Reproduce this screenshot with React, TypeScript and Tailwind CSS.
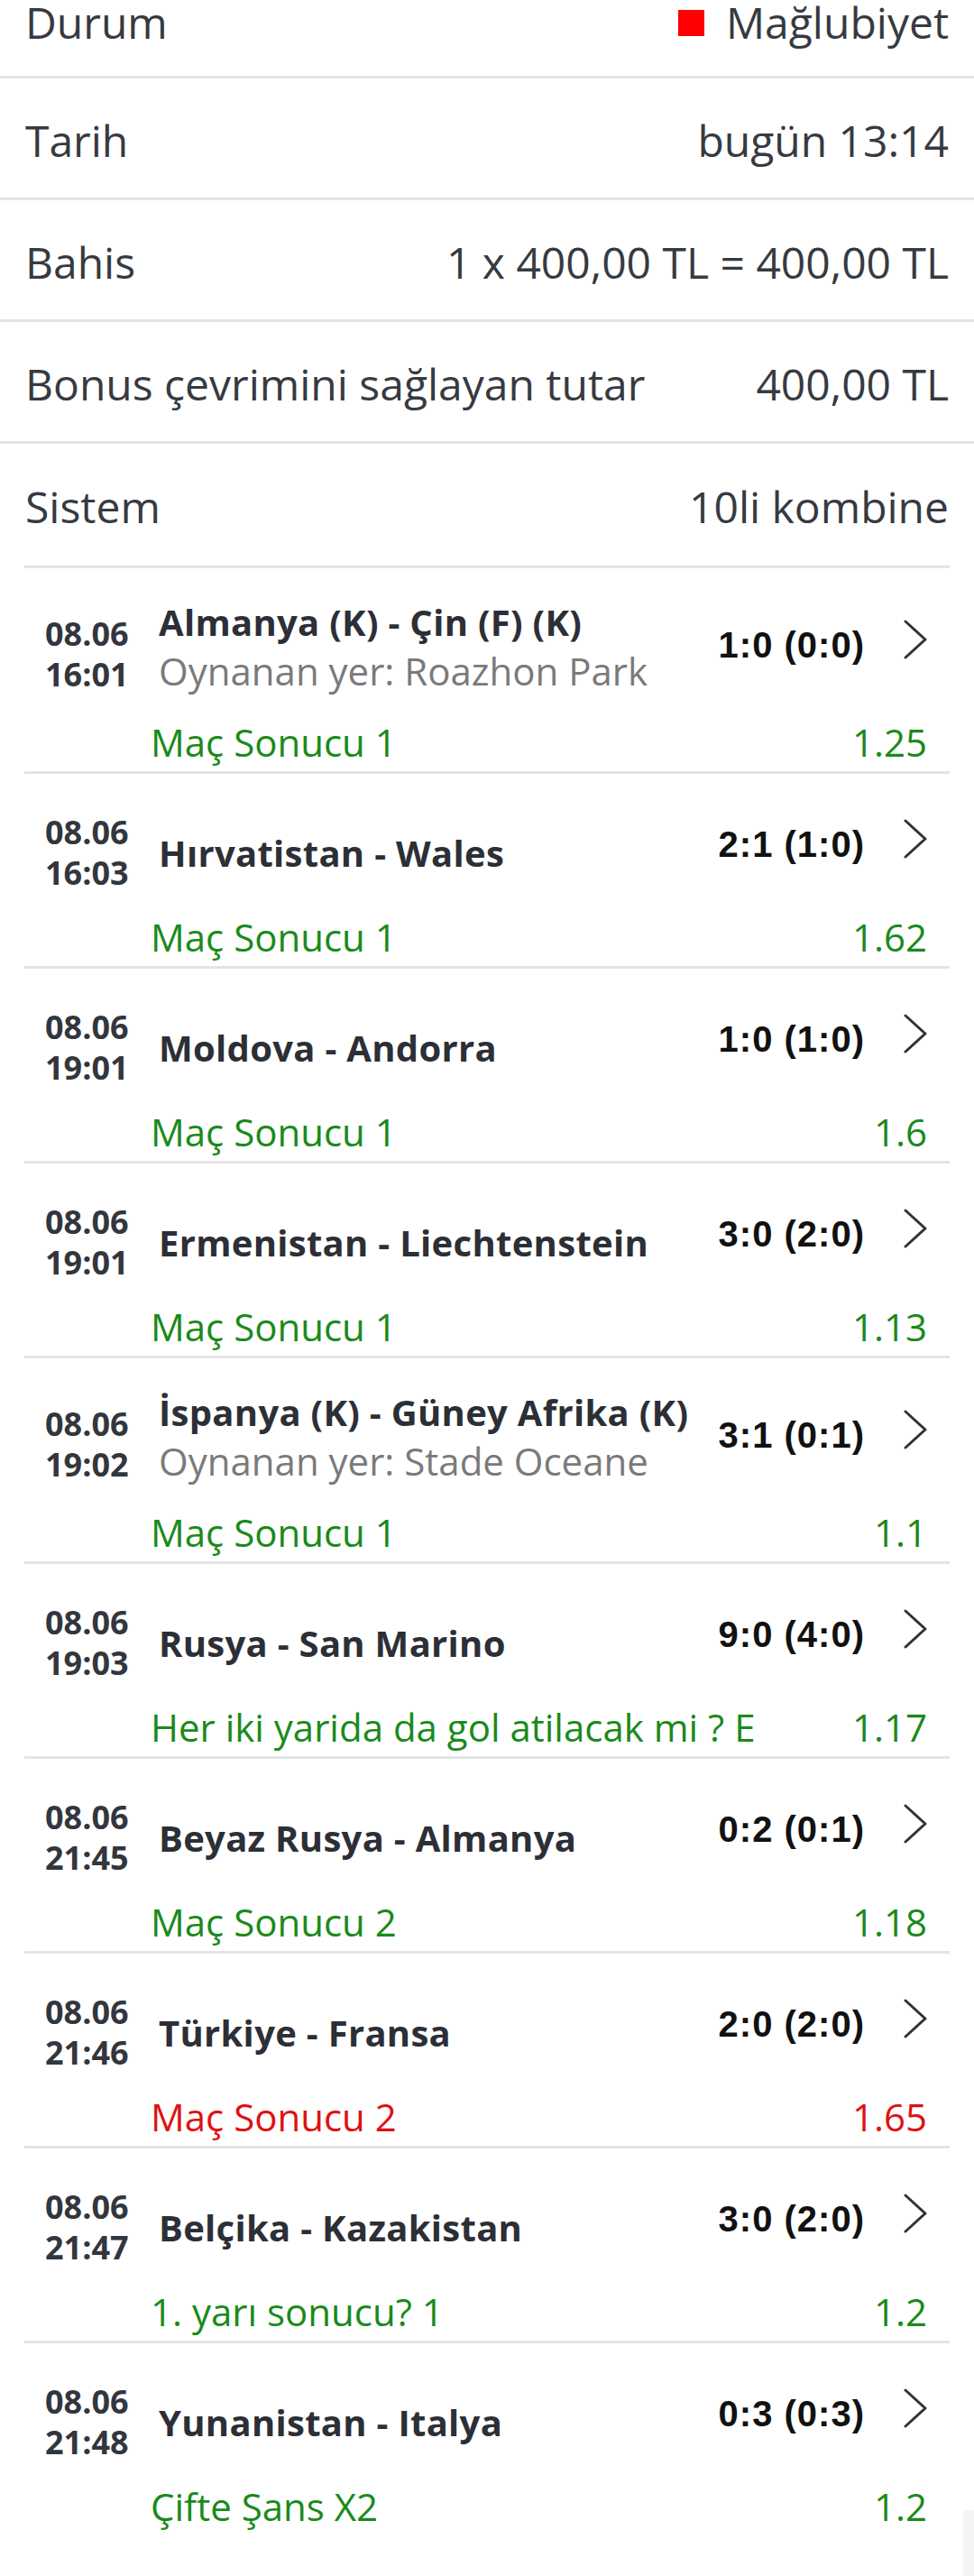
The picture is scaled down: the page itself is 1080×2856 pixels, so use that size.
import { ReactNode } from "react";

type Match = {
  date: string;
  time: string;
  teams: string;
  venue?: string;
  score: string;
  bet: string;
  odds: string;
  lost?: boolean;
};

const matches: Match[] = [
  { date: "08.06", time: "16:01", teams: "Almanya (K) - Çin (F) (K)", venue: "Oynanan yer: Roazhon Park", score: "1:0 (0:0)", bet: "Maç Sonucu 1", odds: "1.25" },
  { date: "08.06", time: "16:03", teams: "Hırvatistan - Wales", score: "2:1 (1:0)", bet: "Maç Sonucu 1", odds: "1.62" },
  { date: "08.06", time: "19:01", teams: "Moldova - Andorra", score: "1:0 (1:0)", bet: "Maç Sonucu 1", odds: "1.6" },
  { date: "08.06", time: "19:01", teams: "Ermenistan - Liechtenstein", score: "3:0 (2:0)", bet: "Maç Sonucu 1", odds: "1.13" },
  { date: "08.06", time: "19:02", teams: "İspanya (K) - Güney Afrika (K)", venue: "Oynanan yer: Stade Oceane", score: "3:1 (0:1)", bet: "Maç Sonucu 1", odds: "1.1" },
  { date: "08.06", time: "19:03", teams: "Rusya - San Marino", score: "9:0 (4:0)", bet: "Her iki yarida da gol atilacak mi ? E", odds: "1.17" },
  { date: "08.06", time: "21:45", teams: "Beyaz Rusya - Almanya", score: "0:2 (0:1)", bet: "Maç Sonucu 2", odds: "1.18" },
  { date: "08.06", time: "21:46", teams: "Türkiye - Fransa", score: "2:0 (2:0)", bet: "Maç Sonucu 2", odds: "1.65", lost: true },
  { date: "08.06", time: "21:47", teams: "Belçika - Kazakistan", score: "3:0 (2:0)", bet: "1. yarı sonucu? 1", odds: "1.2" },
  { date: "08.06", time: "21:48", teams: "Yunanistan - Italya", score: "0:3 (0:3)", bet: "Çifte Şans X2", odds: "1.2" },
];

function InfoRow({ label, value, first, last }: { label: string; value: ReactNode; first?: boolean; last?: boolean }) {
  return (
    <div
      className={
        first
          ? "flex h-[87px] items-start justify-between border-b-[3px] border-[#e3e4e6] px-[28px]"
          : last
            ? "flex h-[135px] items-center justify-between px-[28px] pt-[4px]"
            : "flex h-[135px] items-center justify-between border-b-[3px] border-[#e3e4e6] px-[28px] pt-[6px]"
      }
    >
      <span className="leading-[50px]">{label}</span>
      <span className="leading-[50px]">{value}</span>
    </div>
  );
}

function Chevron() {
  return (
    <svg width="26" height="44" viewBox="0 0 26 44" fill="none">
      <polyline points="2,2 24,22 2,42" stroke="#333333" strokeWidth="3" strokeLinecap="round" strokeLinejoin="round" />
    </svg>
  );
}

function Score({ value, venue }: { value: string; venue: boolean }) {
  return (
    <div className={venue ? "mt-[28px] shrink-0" : "mt-[15px] shrink-0"}>
      <span className="block whitespace-nowrap font-['Liberation_Sans'] text-[40px] font-bold leading-[42px] tracking-[1px] text-[#111111]">{value}</span>
    </div>
  );
}

function MatchRow({ m }: { m: Match }) {
  const hasVenue = !!m.venue;
  return (
    <div
      className={
        hasVenue
          ? "border-t-[3px] border-[#e3e4e6] pl-[23px] pr-[25px] pt-[36px] pb-[8px]"
          : "border-t-[3px] border-[#e3e4e6] pl-[23px] pr-[25px] pt-[42px] pb-[8px]"
      }
    >
      <div className="flex items-start">
        <div
          className={
            hasVenue
              ? "mt-[14px] w-[126px] shrink-0 text-[36px] font-bold leading-[45px] text-[#33363d]"
              : "w-[126px] shrink-0 text-[36px] font-bold leading-[45px] text-[#33363d]"
          }
        >
          <div>{m.date}</div>
          <div>{m.time}</div>
        </div>
        <div className={hasVenue ? "min-w-0 flex-1" : "mt-[22px] min-w-0 flex-1"}>
          <div className="whitespace-nowrap text-[40px] font-bold leading-[48px] tracking-[0.3px] text-[#2c2f36]">{m.teams}</div>
          {m.venue && <div className="mt-[6px] whitespace-nowrap text-[42px] leading-[48px] text-[#7a7a7a]">{m.venue}</div>}
        </div>
        <Score value={m.score} venue={hasVenue} />
        <div className={hasVenue ? "ml-[43px] mt-[21px] shrink-0" : "ml-[43px] mt-[8px] shrink-0"}>
          <Chevron />
        </div>
      </div>
      <div
        className={
          (hasVenue ? "mt-[29px] " : "mt-[25px] ") +
          (m.lost
            ? "flex items-center justify-between pl-[117px] text-[42px] leading-[48px] text-[#de1212]"
            : "flex items-center justify-between pl-[117px] text-[42px] leading-[48px] text-[#1a8a1a]")
        }
      >
        <span className="whitespace-nowrap">{m.bet}</span>
        <span>{m.odds}</span>
      </div>
    </div>
  );
}

export default function App() {
  return (
    <div className="relative min-h-[2856px] w-full overflow-hidden bg-white text-[#363a41] font-['Open_Sans']">
      <div className="text-[48px]">
        <InfoRow
          first
          label="Durum"
          value={
            <span className="flex items-center">
              <span className="mr-[24px] inline-block h-[29px] w-[29px] bg-[#ff0000]" />
              Mağlubiyet
            </span>
          }
        />
        <InfoRow label="Tarih" value="bugün 13:14" />
        <InfoRow label="Bahis" value="1 x 400,00 TL = 400,00 TL" />
        <InfoRow label="Bonus çevrimini sağlayan tutar" value="400,00 TL" />
        <InfoRow last label="Sistem" value="10li kombine" />
      </div>

      <div className="mx-[27px]">
        {matches.map((m, i) => (
          <MatchRow key={i} m={m} />
        ))}
      </div>

      {/* overlay scrollbar track */}
      <div className="absolute right-0 top-[2783px] h-[73px] w-[12px] bg-[#f4f4f4]" />
    </div>
  );
}
